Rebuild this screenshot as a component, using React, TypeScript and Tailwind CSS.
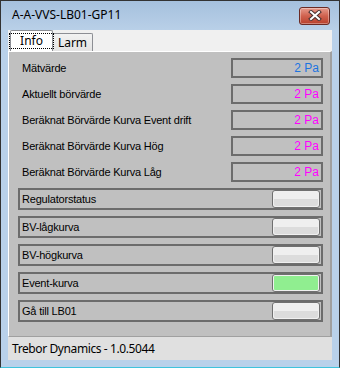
import React from 'react';

const valueRows = [
  { label: 'Mätvärde', value: '2 Pa', color: 'text-[#1c74e0]' },
  { label: 'Aktuellt börvärde', value: '2 Pa', color: 'text-[#ff00ff]' },
  { label: 'Beräknat Börvärde Kurva Event drift', value: '2 Pa', color: 'text-[#ff00ff]' },
  { label: 'Beräknat Börvärde Kurva Hög', value: '2 Pa', color: 'text-[#ff00ff]' },
  { label: 'Beräknat Börvärde Kurva Låg', value: '2 Pa', color: 'text-[#ff00ff]' },
];

const buttonRows = [
  { label: 'Regulatorstatus', on: false },
  { label: 'BV-lågkurva', on: false },
  { label: 'BV-högkurva', on: false },
  { label: 'Event-kurva', on: true },
  { label: 'Gå till LB01', on: false },
];

function CloseButton() {
  return (
    <div className="w-[31px] h-[18px] rounded-[3px] border border-[#6b2a24] bg-gradient-to-b from-[#e59a8c] via-[#d0614e] to-[#b8402c] flex items-center justify-center shadow-[inset_0_0_0_1px_rgba(255,255,255,0.35)]">
      <svg width="14" height="11" viewBox="0 0 14 11">
        <path d="M3 2 L11 9 M11 2 L3 9" stroke="#4a3030" strokeWidth="4" strokeLinecap="square" />
        <path d="M3 2 L11 9 M11 2 L3 9" stroke="#ffffff" strokeWidth="2" strokeLinecap="square" />
      </svg>
    </div>
  );
}

function StateButton({ on }: { on: boolean }) {
  return (
    <div className="w-[48px] h-[18px] rounded-[3px] border border-[#707070] bg-[#f0f0f0] p-[1px]">
      {on ? (
        <div className="w-full h-full bg-[#90ee90] rounded-[1px]" />
      ) : (
        <div className="w-full h-full rounded-[2px] flex flex-col overflow-hidden">
          <div className="flex-1 bg-[#efefef]" />
          <div className="flex-1 bg-[#dcdcdc]" />
        </div>
      )}
    </div>
  );
}

export default function App() {
  return (
    <div className="w-[340px] h-[368px] border border-[#323232] border-b-[#3fc3dc] bg-[#b9d1ea] flex flex-col font-['Liberation_Sans',sans-serif]">
      <div className="h-[29px] shrink-0 bg-gradient-to-b from-[#a5c0dd] to-[#b9d0e8] flex items-center justify-between pl-[11px] pr-[9px]">
        <span className="text-[12px] text-black font-['Noto_Sans',sans-serif] pb-[1px]">A-A-VVS-LB01-GP11</span>
        <CloseButton />
      </div>
      <div className="mx-[7px] mb-[7px] flex-1 flex flex-col bg-[#f0f0f0]">
        <div className="h-[21px] flex items-end pl-[2px] font-['Noto_Sans',sans-serif] text-[12px] text-black">
          <div className="h-[21px] w-[43px] border border-b-0 border-[#8c8e94] bg-white flex items-center justify-center rounded-t-[2px] relative z-10">
            <span className="border border-dotted border-black px-[10px] leading-[14px]">Info</span>
          </div>
          <div className="h-[18px] w-[40px] border border-l-0 border-b-0 border-[#8c8e94] bg-gradient-to-b from-[#f2f2f2] to-[#e3e3e3] flex items-center justify-center rounded-tr-[2px]">
            Larm
          </div>
        </div>
        <div className="flex-1 border-l border-t border-white border-r-2 border-r-[#a0a0a0] border-b border-b-[#a0a0a0] bg-[#c0c0c0] pt-[6px] pl-[9px] pr-[7px] flex flex-col gap-[6px] text-[11px] text-black tracking-[-0.2px]">
          {valueRows.map((r) => (
            <div key={r.label} className="h-[20px] flex items-center justify-between">
              <span className="pl-[4px]">{r.label}</span>
              <div className={`w-[92px] h-[20px] border-2 border-[#6c6c6c] flex items-center justify-end pr-[2px] text-[12px] tracking-normal ${r.color}`}>
                {r.value}
              </div>
            </div>
          ))}
          {buttonRows.map((r) => (
            <div key={r.label} className="h-[22px] border-2 border-[#6c6c6c] flex items-center justify-between pl-[2px] pr-[1px]">
              <span>{r.label}</span>
              <StateButton on={r.on} />
            </div>
          ))}
        </div>
        <div className="h-[23px] bg-[#e0e0e0] flex items-center pl-[4px] text-[12px] text-black font-['Noto_Sans',sans-serif] tracking-[-0.4px]">
          Trebor Dynamics - 1.0.5044
        </div>
      </div>
    </div>
  );
}
